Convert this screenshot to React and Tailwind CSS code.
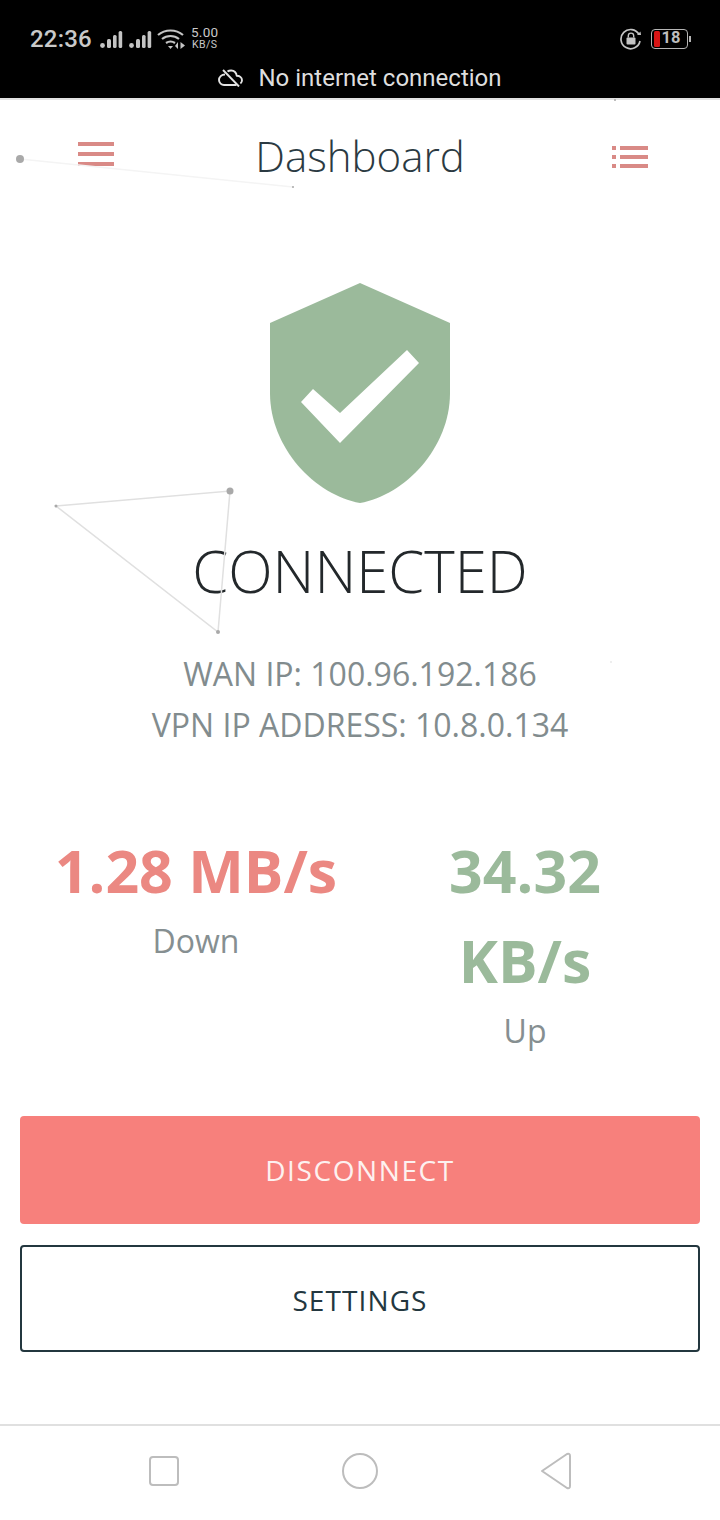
const Particles = () => (
  <svg className="absolute inset-0 pointer-events-none" width="720" height="1520">
    <path d="M56 506 L230 491 L218 632 Z" stroke="#e0e0e0" strokeWidth="1.5" fill="none" />
    <path d="M20 159 L293 187" stroke="#f4f4f4" strokeWidth="1.5" />
    <g fill="#a9a9a9">
      <circle cx="20" cy="159" r="4" />
      <circle cx="293" cy="187" r="1" />
      <circle cx="230" cy="491" r="3.5" />
      <circle cx="56" cy="506" r="1.5" />
      <circle cx="218" cy="632" r="2" />
      <circle cx="615" cy="100" r="1" />
      <circle cx="611" cy="662" r="0.7" fill="#d0d0d0" />
    </g>
  </svg>
);

const Signal = ({ className }) => (
  <svg width="23" height="20" viewBox="0 0 23 20" className={className} fill="#c4c4c4">
    <circle cx="2.5" cy="16.5" r="2.4" />
    <rect x="7" y="10" width="4" height="9" rx="1.5" />
    <rect x="13" y="6" width="3.6" height="13" rx="1.5" />
    <rect x="18.6" y="2" width="3.6" height="17" rx="1.5" />
  </svg>
);

const StatusBar = () => (
  <div className="h-[98px] bg-black text-[#c9c9c9] font-['Roboto',sans-serif] shrink-0">
    <div className="flex items-center justify-between h-[58px] pt-[19px] pl-[30px] pr-[32px]">
      <div className="flex items-center">
        <span className="text-[24px] font-medium leading-none tracking-[0.2px]">22:36</span>
        <Signal className="ml-[8px]" />
        <Signal className="ml-[6px]" />
        <svg width="29" height="22" viewBox="0 0 29 22" className="ml-[5px]" fill="none" stroke="#c4c4c4" strokeWidth="2.2">
          <path d="M1 7 C8 1 19 1 26 7" />
          <path d="M5 11 C10 7 17 7 22 11" />
          <path d="M9 15 C12 13 15 13 18 15" />
          <path d="M13.5 21 L11 18 L16 18 Z" fill="#c4c4c4" stroke="none" />
          <path d="M21 21 L21 14 L18 18 Z M23.5 14 L23.5 21 L28 17.5 Z" fill="#c4c4c4" stroke="none" />
        </svg>
        <div className="ml-[5px] flex flex-col items-center leading-none">
          <span className="text-[13.5px] leading-[13px] tracking-[0.3px]">5.00</span>
          <span className="text-[10.5px] leading-[12px] tracking-[0.4px]">KB/S</span>
        </div>
      </div>
      <div className="flex items-center">
        <svg width="22" height="22" viewBox="0 0 22 22" fill="none">
          <path d="M19 6.5 A9.6 9.6 0 1 0 20 13" stroke="#c4c4c4" strokeWidth="1.7" />
          <path d="M17 7 L21 7 L20.5 3.5 Z" fill="#c4c4c4" />
          <rect x="6.5" y="9.5" width="9" height="7" rx="1" fill="#c4c4c4" />
          <path d="M8.3 9.5 V7.8 A2.7 2.7 0 0 1 13.7 7.8 V9.5" stroke="#c4c4c4" strokeWidth="1.4" />
        </svg>
        <div className="ml-[9px] w-[37px] h-[20px] rounded-[4px] border border-[#b5b5b5] flex items-center pl-[1.5px] relative">
          <div className="w-[6px] h-[16px] bg-[#d81515] rounded-[1.5px]" />
          <span className="ml-[2px] text-[16.5px] font-bold leading-none text-[#bdbdbd]">18</span>
          <div className="absolute right-[-4px] top-[6px] w-[2px] h-[6px] bg-[#b5b5b5]" />
        </div>
      </div>
    </div>
    <div className="flex items-center justify-center h-[40px] text-[#dedede]">
      <svg width="25" height="18" viewBox="0 0 25 18" fill="none" stroke="#e2e2e2" strokeWidth="1.9" className="mr-[15px]" strokeLinejoin="round">
        <path d="M7 5.5 C3.5 5.5 1 8 1 11 C1 14 3.5 16 6 16 L18.5 16" />
        <path d="M9.5 2.6 C11.5 1 15 1 17 3 C18.2 4.2 18.6 5.5 18.7 6.8 C21.5 6.8 24 8.6 24 11.3 C24 12.7 23.4 13.8 22.4 14.6" />
        <path d="M5 1 L21 17.5" />
      </svg>
      <span className="text-[24px] leading-none">No internet connection</span>
    </div>
  </div>
);

const Stat = ({ value, label, color }) => (
  <div className="w-[300px] text-center">
    <div className={`text-[59px] font-bold leading-[90px] ${color}`}>{value}</div>
    <div className="text-[32px] leading-[48px] text-[#868f91] mt-[2px]">{label}</div>
  </div>
);

export default function App() {
  return (
    <div className="relative w-[720px] h-[1520px] bg-white overflow-hidden flex flex-col font-['Open_Sans',sans-serif]">
      <StatusBar />
      <div className="h-[2px] bg-[#e2e2e2] shrink-0" />

      <header className="flex items-center justify-between h-[112px] pl-[78px] pr-[72px] shrink-0">
        <div className="flex flex-col gap-[6px] w-[36px] -mt-[4px]">
          <div className="h-[4px] bg-[#d98a86]" />
          <div className="h-[4px] bg-[#d98a86]" />
          <div className="h-[4px] bg-[#d98a86]" />
        </div>
        <h1 className="text-[42px] font-light text-[#2b3a42] leading-none mr-[6px]">Dashboard</h1>
        <div className="flex flex-col gap-[5px] w-[36px] mt-[2px]">
          {[0, 1, 2].map((i) => (
            <div key={i} className="flex gap-[4px] h-[4px]">
              <div className="w-[4px] bg-[#d98a86]" />
              <div className="flex-1 bg-[#d98a86]" />
            </div>
          ))}
        </div>
      </header>

      <main className="flex flex-col items-center flex-1">
        <svg width="180" height="220" viewBox="0 0 180 220" className="mt-[71px]">
          <path d="M90 0 L180 40 L180 110 C180 165 135 212 90 220 C45 212 0 165 0 110 L0 40 Z" fill="#9bba9b" />
          <path d="M31 119 L43 106 L70 130 L137 67 L149 80 L70 160 Z" fill="#fff" />
        </svg>
        <div className="mt-[28px] text-[58px] font-light text-[#23282b] leading-[80px]">CONNECTED</div>
        <div className="mt-[37px] text-[32px] leading-[51px] text-[#828c8e] text-center">
          <div>WAN IP: 100.96.192.186</div>
          <div>VPN IP ADDRESS: 10.8.0.134</div>
        </div>
        <div className="mt-[75px] flex w-full pl-[46px]">
          <Stat value="1.28 MB/s" label="Down" color="text-[#eb8882]" />
          <div className="ml-[29px]">
            <Stat
              value={<>34.32<br />KB/s</>}
              label="Up"
              color="text-[#9bba9b]"
            />
          </div>
        </div>
        <div className="mt-auto w-full px-[20px] flex flex-col gap-[21px] mb-[72px]">
          <button className="h-[108px] rounded-[4px] bg-[#f7807c] text-[#fdf1f0] text-[28px] tracking-[1.6px]">DISCONNECT</button>
          <button className="h-[107px] rounded-[4px] border-2 border-[#23373f] text-[#23373f] text-[28px] tracking-[1.1px] pt-[3px]">SETTINGS</button>
        </div>
      </main>

      <nav className="h-[96px] border-t-2 border-[#e0e0e0] flex items-center justify-between pl-[148px] pr-[148px] pb-[4px] shrink-0">
        <svg width="32" height="32" viewBox="0 0 32 32" fill="none" stroke="#bdbdbd" strokeWidth="2">
          <rect x="2" y="2" width="28" height="28" rx="3" />
        </svg>
        <svg width="38" height="38" viewBox="0 0 38 38" fill="none" stroke="#bdbdbd" strokeWidth="2">
          <circle cx="19" cy="19" r="17" />
        </svg>
        <svg width="32" height="38" viewBox="0 0 32 38" fill="none" stroke="#bdbdbd" strokeWidth="2" strokeLinejoin="round">
          <path d="M2 19 L27 2 Q30 1 30 4 L30 34 Q30 37 27 36 Z" />
        </svg>
      </nav>

      <Particles />
    </div>
  );
}
